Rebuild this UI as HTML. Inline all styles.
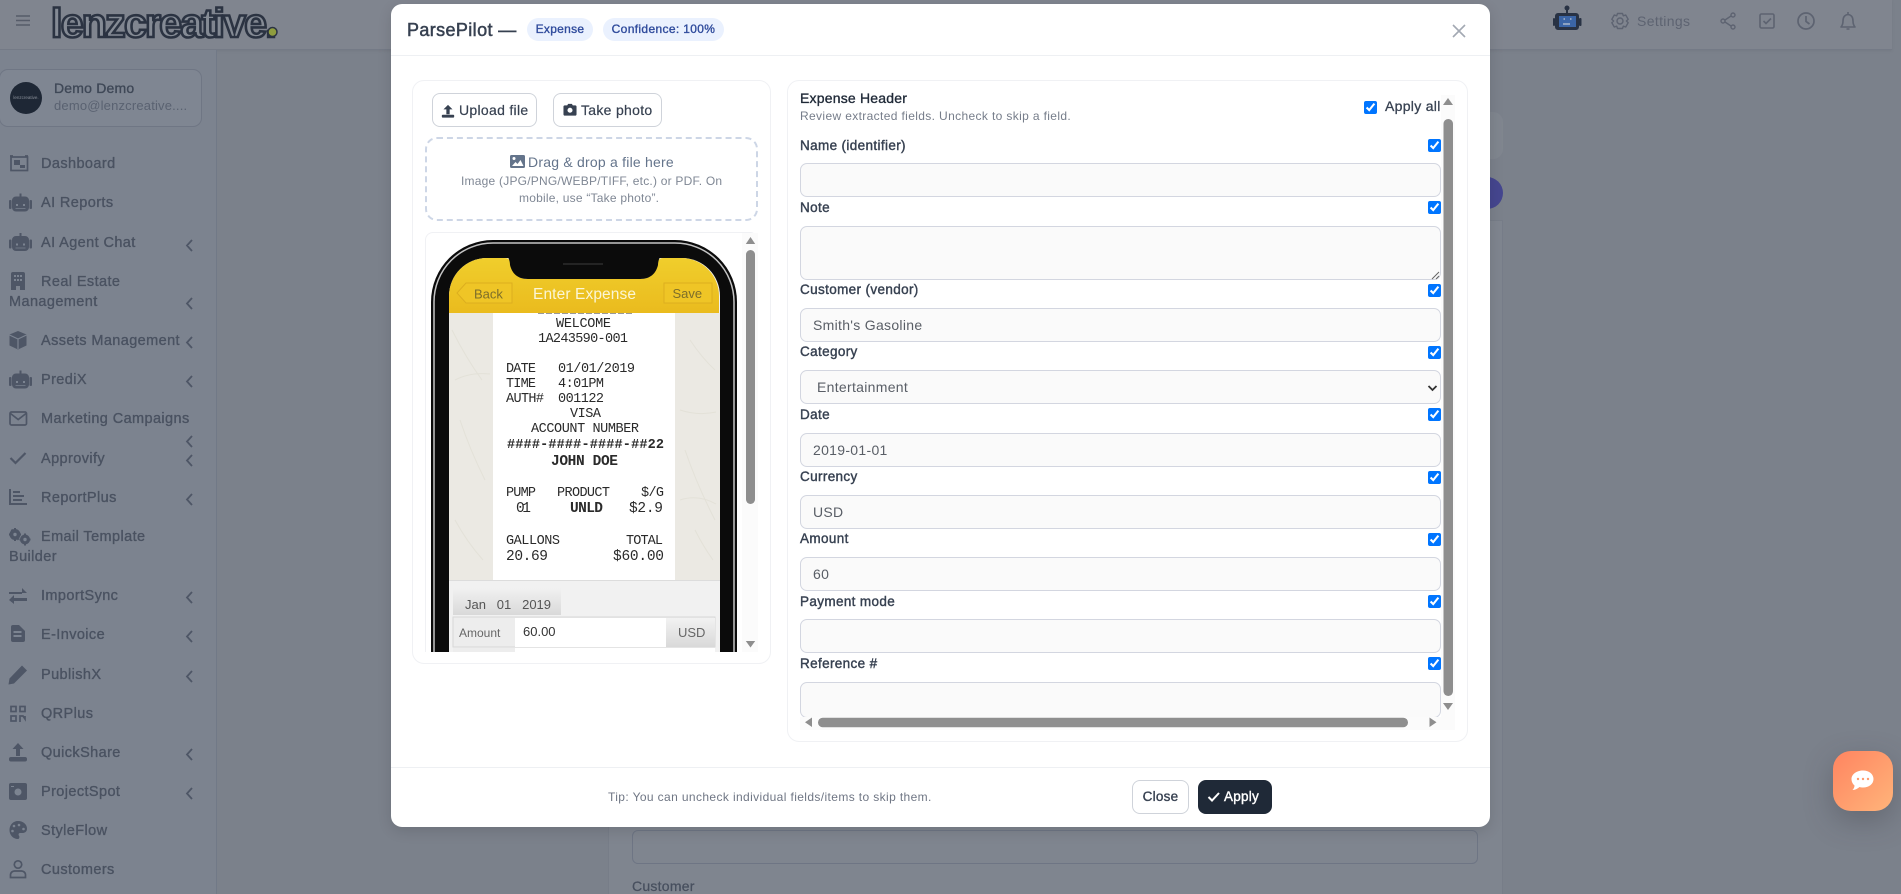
<!DOCTYPE html>
<html><head><meta charset="utf-8">
<style>
*{box-sizing:border-box}
html,body{margin:0;padding:0;width:1901px;height:894px;overflow:hidden;background:#7b818b;font-family:"Liberation Sans",sans-serif}
.a{position:absolute;white-space:nowrap}
.nav{position:absolute;white-space:nowrap;font-size:14.5px;font-weight:400;color:#4a5261;letter-spacing:.4px;line-height:20px;-webkit-text-stroke:.35px #4a5261}
.lbl{position:absolute;left:800px;white-space:nowrap;font-size:13.5px;color:#374151;letter-spacing:.36px;line-height:18px;-webkit-text-stroke:.4px #374151}
.inp{position:absolute;left:800px;width:641px;height:34px;background:#fafafa;border:1px solid #d3d6e0;border-radius:7px;font-size:14px;color:#595e66;padding:0 12px;line-height:33px;letter-spacing:.3px}
input[type=checkbox]{position:absolute;margin:0;width:13px;height:13px;left:1428px;accent-color:#0075ff}
.btn{position:absolute;background:#fff;border:1px solid #cfd3da;border-radius:8px}
</style></head><body>

<!-- page behind -->
<div class="a" style="left:0;top:0;width:1892px;height:50px;background:#80858f;border-bottom:1px solid #747a86;box-shadow:0 1px 3px rgba(0,0,0,.06)"></div>
<div class="a" style="left:0;top:50px;width:217px;height:844px;background:#7c838f;border-right:1px solid #717987"></div>
<div class="a" style="left:608px;top:220px;width:895px;height:674px;background:#7f858f;border-left:1px solid #777d88;border-right:1px solid #777d88;border-top:1px solid #777d88"></div>
<div class="a" style="left:1400px;top:112px;width:103px;height:47px;background:#80868f;border-radius:10px"></div>
<div class="a" style="left:1471px;top:177px;width:32px;height:32px;background:#45468f;border-radius:50%"></div>
<div class="a" style="left:632px;top:830px;width:846px;height:34px;border:1px solid #6e7584;border-radius:6px"></div>
<div class="a" style="left:632px;top:878px;font-size:14px;color:#474f5e;letter-spacing:.25px;line-height:16px;-webkit-text-stroke:.25px #474f5e">Customer</div>

<!-- logo -->
<div class="a" style="left:51px;top:-4px;font-size:41px;font-weight:700;letter-spacing:-1.7px;color:#858b95;-webkit-text-stroke:2.6px #2b3342;line-height:54px">lenzcreative.</div>
<svg class="a" style="left:0;top:0" width="1901" height="894" fill="none">
<circle cx="272.500" cy="32" r="4.500" fill="#8f9d3e" stroke="#2b3342" stroke-width="1.500"/>
<path d="M16 16h14M16 20.500h14M16 25h14" stroke="#565c69" stroke-width="1.600"/>
<g fill="#4e5666" stroke="none">
<!-- robots -->
<g><path d="M19.500 193.500h2v3h3.500a4 4 0 0 1 4 4v7a4 4 0 0 1-4 4h-9a4 4 0 0 1-4-4v-7a4 4 0 0 1 4-4h3.500z"/><rect x="9" y="200" width="2.500" height="9" rx="1"/><rect x="29.500" y="200" width="2.500" height="9" rx="1"/></g>
<path d="M19.500 233h2v3h3.500a4 4 0 0 1 4 4v7a4 4 0 0 1-4 4h-9a4 4 0 0 1-4-4v-7a4 4 0 0 1 4-4h3.500z"/><rect x="9" y="239.500" width="2.500" height="9" rx="1"/><rect x="29.500" y="239.500" width="2.500" height="9" rx="1"/>
<path d="M19.500 370.500h2v3h3.500a4 4 0 0 1 4 4v7a4 4 0 0 1-4 4h-9a4 4 0 0 1-4-4v-7a4 4 0 0 1 4-4h3.500z"/><rect x="9" y="377" width="2.500" height="9" rx="1"/><rect x="29.500" y="377" width="2.500" height="9" rx="1"/>
<!-- building -->
<path d="M13 272h10a2 2 0 0 1 2 2v16h-5v-4h-4v4h-5v-16a2 2 0 0 1 2-2z"/>
<!-- box -->
<path d="M18 331l8.500 3.500v11L18 349.500l-8.500-4v-11z"/>
<!-- chart -->
<path d="M9 489h2v14h16v2H9zM13 491h7v2h-7zM13 495h11v2h-11zM13 499h9v2h-9z"/>
<!-- gears -->
<circle cx="15" cy="534.500" r="5.500"/><circle cx="25" cy="539.500" r="5"/>
<path d="M14 528h2v13h-2zM9 533.500h12v2H9zM24 533.500h2v12h-2zM19.500 538.500h11v2h-11zM10.800 530.300l1.400-1.400 7 10.200-1.400 1.400z"/>
<!-- arrows -->
<path d="M9 592h13v-4l5 5-5 0v1H9zM27 598H14v-3l-5 5 5 4v-3h13z"/>
<!-- file -->
<path d="M13 625h6l6 6v9a2 2 0 0 1-2 2H13a2 2 0 0 1-2-2v-13a2 2 0 0 1 2-2z"/>
<!-- pencil -->
<path d="M22 665.500l5 5-13 13-5.500 1 1-6z"/>
<!-- upload -->
<path d="M18 743l5.500 6h-3.500v7h-4v-7h-3.500zM11 757h14a2 2 0 0 1 2 2v.5a2 2 0 0 1-2 2H11a2 2 0 0 1-2-2v-.5a2 2 0 0 1 2-2z"/>
<!-- camera retro -->
<path d="M11 783h14a2 2 0 0 1 2 2v13a2 2 0 0 1-2 2H11a2 2 0 0 1-2-2v-13a2 2 0 0 1 2-2z"/>
<!-- palette -->
<path d="M18 821c5.500 0 9 3.800 9 7.500s-2.500 4.500-5 4.500h-2c-1.500 0-1.800 1.800-1 2.700.8 1 .3 3.300-1 3.300-5 0-8.500-4-8.500-9s3.500-9 8.500-9z"/>
</g>
<g fill="#7c8491">
<path d="M16 204h2v2h-2zM23 204h2v2h-2zM16 243.500h2v2h-2zM23 243.500h2v2h-2zM16 381h2v2h-2zM23 381h2v2h-2z"/>
<path d="M15.500 208h10v1h-10zM15.500 247.500h10v1h-10zM15.500 385h10v1h-10z" opacity=".7"/>
<path d="M14 275h2v2h-2zM17 275h2v2h-2zM20 275h2v2h-2zM14 279h2v2h-2zM17 279h2v2h-2zM20 279h2v2h-2z"/>
<path d="M13.500 631h8v2h-8zM13.500 635h8v2h-8z"/>
<circle cx="18" cy="792" r="3.500"/><path d="M11 786h3v1h-3z"/>
<circle cx="15" cy="534.500" r="1.700"/><circle cx="25" cy="539.500" r="1.700"/>
<circle cx="14" cy="826" r="1.300"/><circle cx="19" cy="825" r="1.300"/><circle cx="23.500" cy="829" r="1.300"/><circle cx="12.500" cy="831" r="1.300"/>
</g>
<g stroke="#4e5666" stroke-width="1.700">
<rect x="11" y="157" width="16.500" height="13.500"/><path d="M10 156h3M25 156h3"/>
<path d="M14 160h6v5h-6zM20 165h5v3h-5z" fill="#4e5666" stroke="none"/>
<path d="M18 339v10M9.500 335l8.500 4 8.500-4" stroke="#7c8491" stroke-width="1.200"/>
<rect x="10" y="412" width="16.500" height="13" rx="1.500"/><path d="M10.500 413.500l7.700 6 7.800-6"/>
<path d="M10.500 458l5 5 10-10" stroke-width="2.200"/>
<rect x="11" y="706.500" width="5" height="5"/><rect x="20" y="706.500" width="5" height="5"/><rect x="11" y="716" width="5" height="5"/>
<path d="M20 722v-6h3l2 3v-3" />
<circle cx="18" cy="864.500" r="3.700"/><path d="M10.500 877.500v-2.500c0-2.500 2-4 4-4h7c2 0 4 1.500 4 4v2.500z"/>
<g stroke-width="1.800">
<path d="M192 240l-5 5.500 5 5.500M192 298l-5 5.500 5 5.500M192 337l-5 5.500 5 5.500M192 376l-5 5.500 5 5.500M192 436l-5 5.500 5 5.500M192 455l-5 5.500 5 5.500M192 494l-5 5.500 5 5.500M192 592l-5 5.500 5 5.500M192 631l-5 5.500 5 5.500M192 671l-5 5.500 5 5.500M192 749l-5 5.500 5 5.500M192 788l-5 5.500 5 5.500"/>
</g></g>
<!-- header right icons -->
<path d="M1566 7h2v6h8a3 3 0 0 1 3 3v11a3 3 0 0 1-3 3h-18a3 3 0 0 1-3-3V16a3 3 0 0 1 3-3h8z" fill="#283244"/><circle cx="1567" cy="8" r="2.500" fill="#283244"/>
<rect x="1553" y="18" width="2" height="8" rx="1" fill="#283244"/><rect x="1579" y="18" width="2.500" height="8" rx="1" fill="#283244"/>
<rect x="1559" y="16" width="17" height="11" fill="#3b65a6"/><path d="M1563 24h7" stroke="#a9b6ca" stroke-width="1.500"/><path d="M1563.500 19h1.500M1570 19h1.500" stroke="#a9b6ca" stroke-width="1.500"/>
<g stroke="#5d6371" stroke-width="1.400">
<circle cx="1620" cy="21" r="3"/><path d="M1617.500 13.500h5l.8 2.300 2.400-.8 2.500 4.300-1.800 1.700 1.800 1.700-2.500 4.300-2.400-.8-.8 2.300h-5l-.8-2.300-2.400.8-2.500-4.300 1.800-1.700-1.800-1.700 2.500-4.300 2.400.8z" stroke-linejoin="round"/>
<circle cx="1733" cy="15" r="2"/><circle cx="1723" cy="21" r="2"/><circle cx="1733" cy="27" r="2"/><path d="M1731 16l-6 4M1725 22l6 4"/>
<rect x="1760" y="14" width="14" height="14" rx="1.500" stroke-width="1.600"/><path d="M1763.500 21l2.500 2.500 5-5" stroke-width="1.600"/>
<circle cx="1806" cy="21" r="8" stroke-width="1.700"/><path d="M1806 16v5.500l3.500 2.500" stroke-width="1.700"/>
<path d="M1841 27c1.300-1.500 2-3 2-6s1-6 5-6.500c4 .5 5 3.500 5 6.500s.7 4.500 2 6zM1848 12v2.500M1846.500 29h3" stroke-width="1.600" stroke-linejoin="round"/>
</g>
</svg>

<!-- user -->
<div class="a" style="left:-1px;top:69px;width:203px;height:58px;border:1px solid #6f7684;border-radius:9px;background:#7f8692"></div>
<div class="a" style="left:10px;top:82px;width:32px;height:32px;border-radius:50%;background:#1e2735;color:#8b919b;font-size:4.500px;line-height:32px;text-align:center">lenzcreative.</div>
<div class="a" style="left:54px;top:79px;font-size:14px;color:#3f4857;letter-spacing:.2px;line-height:18px;-webkit-text-stroke:.35px #3f4857">Demo Demo</div>
<div class="a" style="left:54px;top:97px;font-size:13px;color:#5a6271;letter-spacing:.18px;line-height:18px">demo@lenzcreative....</div>

<div class="nav" style="left:41px;top:154px">Dashboard</div>
<div class="nav" style="left:41px;top:193px">AI Reports</div>
<div class="nav" style="left:41px;top:233px">AI Agent Chat</div>
<div class="nav" style="left:41px;top:272px">Real Estate</div>
<div class="nav" style="left:9px;top:292px">Management</div>
<div class="nav" style="left:41px;top:331px">Assets Management</div>
<div class="nav" style="left:41px;top:370px">PrediX</div>
<div class="nav" style="left:41px;top:409px">Marketing Campaigns</div>
<div class="nav" style="left:41px;top:449px">Approvify</div>
<div class="nav" style="left:41px;top:488px">ReportPlus</div>
<div class="nav" style="left:41px;top:527px">Email Template</div>
<div class="nav" style="left:9px;top:547px">Builder</div>
<div class="nav" style="left:41px;top:586px">ImportSync</div>
<div class="nav" style="left:41px;top:625px">E-Invoice</div>
<div class="nav" style="left:41px;top:665px">PublishX</div>
<div class="nav" style="left:41px;top:704px">QRPlus</div>
<div class="nav" style="left:41px;top:743px">QuickShare</div>
<div class="nav" style="left:41px;top:782px">ProjectSpot</div>
<div class="nav" style="left:41px;top:821px">StyleFlow</div>
<div class="nav" style="left:41px;top:860px">Customers</div>

<div class="a" style="left:1637px;top:12px;font-size:14px;color:#5d6371;letter-spacing:.35px;line-height:18px">Settings</div>

<!-- chat button -->
<div class="a" style="left:1833px;top:751px;width:60px;height:60px;border-radius:18px;background:linear-gradient(135deg,#ff8460,#ffb47a);box-shadow:0 10px 28px rgba(60,60,70,.35)"></div>
<svg class="a" style="left:1850px;top:769px" width="26" height="24"><path d="M13 1.500c6 0 10.500 3.500 10.500 8.500s-4.500 8.500-10.500 8.500c-1.300 0-2.500-.2-3.500-.5C8 19.300 5.500 21 2.500 21c1.300-1.200 2-2.800 2-4.500C2.800 15 1.500 12.800 1.500 10 1.500 5 7 1.500 13 1.500z" fill="#fff"/><circle cx="8" cy="10" r="1.200" fill="#ff9a6d"/><circle cx="13" cy="10" r="1.200" fill="#ff9a6d"/><circle cx="18" cy="10" r="1.200" fill="#ff9a6d"/></svg>

<!-- modal -->
<div class="a" style="left:391px;top:4px;width:1099px;height:823px;background:#fff;border-radius:11px;box-shadow:0 4px 14px rgba(0,0,0,.12)"></div>
<div class="a" style="left:391px;top:55px;width:1099px;height:1px;background:#eef0f3"></div>
<div class="a" style="left:391px;top:767px;width:1099px;height:1px;background:#eef0f3"></div>

<div class="a" style="left:407px;top:19px;font-size:18px;color:#374151;letter-spacing:.38px;line-height:22px;-webkit-text-stroke:.5px #374151">ParsePilot —</div>
<div class="a" style="left:527px;top:18px;width:66px;height:23px;border-radius:12px;background:#eaf1fe;color:#2f4b9c;font-size:12px;letter-spacing:.3px;text-align:center;line-height:23px;-webkit-text-stroke:.35px #2f4b9c">Expense</div>
<div class="a" style="left:603px;top:18px;width:121px;height:23px;border-radius:12px;background:#eaf1fe;color:#2f4b9c;font-size:12px;letter-spacing:.35px;text-align:center;line-height:23px;-webkit-text-stroke:.35px #2f4b9c">Confidence: 100%</div>
<svg class="a" style="left:1451px;top:23px" width="16" height="16"><path d="M2 2l12 12M14 2L2 14" stroke="#a3a9b3" stroke-width="1.600"/></svg>

<!-- left card -->
<div class="a" style="left:412px;top:80px;width:359px;height:584px;border:1px solid #f0f1f4;border-radius:12px"></div>
<div class="btn" style="left:432px;top:93px;width:105px;height:34px"></div>
<div class="btn" style="left:553px;top:93px;width:109px;height:34px"></div>
<svg class="a" style="left:441px;top:104px" width="14" height="14" viewBox="0 0 15 17"><path d="M7.500 1l5.500 5.500H9.500v6h-4v-6H2zM1 13h13a1 1 0 0 1 1 1v1.500a1 1 0 0 1-1 1H1a1 1 0 0 1-1-1V14a1 1 0 0 1 1-1z" fill="#374151"/></svg>
<div class="a" style="left:459px;top:101px;font-size:14px;color:#374151;letter-spacing:.3px;line-height:18px;-webkit-text-stroke:.2px #374151">Upload file</div>
<svg class="a" style="left:563px;top:103px" width="14" height="14" viewBox="0 0 15 15"><path d="M4.500 2.500L5.500 1h4l1 1.500H13a1.500 1.500 0 0 1 1.500 1.500v8A1.500 1.500 0 0 1 13 13.500H2A1.500 1.500 0 0 1 .5 12V4A1.500 1.500 0 0 1 2 2.500z" fill="#374151"/><circle cx="7.500" cy="7.800" r="2.700" fill="#fff"/></svg>
<div class="a" style="left:581px;top:101px;font-size:14px;color:#374151;letter-spacing:.3px;line-height:18px;-webkit-text-stroke:.2px #374151">Take photo</div>

<div class="a" style="left:425px;top:137px;width:333px;height:84px;border:2px dashed #cdd6e6;border-radius:12px"></div>
<svg class="a" style="left:510px;top:155px" width="15" height="13"><path d="M1.500 0h12A1.500 1.500 0 0 1 15 1.500v10a1.500 1.500 0 0 1-1.500 1.500h-12A1.500 1.500 0 0 1 0 11.500v-10A1.500 1.500 0 0 1 1.500 0z" fill="#64748b"/><circle cx="4" cy="3.500" r="1.500" fill="#fff"/><path d="M2 11l3.500-4 2 2 3-4L13.500 11z" fill="#fff"/></svg>
<div class="a" style="left:528px;top:153px;font-size:14px;color:#64748b;letter-spacing:.22px;line-height:18px">Drag &amp; drop a file here</div>
<div class="a" style="left:461px;top:172px;font-size:12px;color:#7f8794;letter-spacing:.22px;line-height:18px">Image (JPG/PNG/WEBP/TIFF, etc.) or PDF. On</div>
<div class="a" style="left:519px;top:189px;font-size:12px;color:#7f8794;letter-spacing:.22px;line-height:18px">mobile, use “Take photo”.</div>

<!-- image area -->
<div class="a" style="left:425px;top:232px;width:333px;height:420px;border-radius:8px 8px 0 0;overflow:hidden;border:1px solid #f0f1f4;border-bottom:0;border-right:0">
<svg style="position:absolute;left:-426px;top:-233px" width="1901" height="894" font-family="Liberation Mono,monospace">
<defs>
<linearGradient id="y" x1="0" y1="0" x2="0" y2="1"><stop offset="0" stop-color="#f0ce2c"/><stop offset="1" stop-color="#eabb1e"/></linearGradient>
<linearGradient id="g" x1="0" y1="0" x2="0" y2="1"><stop offset="0" stop-color="#f2f2f2"/><stop offset="1" stop-color="#d9d9d9"/></linearGradient>
</defs>
<rect x="431" y="240" width="306" height="640" rx="62" fill="#0b0b0b"/>
<rect x="434" y="243" width="300" height="640" rx="59" fill="none" stroke="#c4c4c4" stroke-width="1.500"/>
<rect x="449" y="258" width="271" height="620" rx="38" fill="#f1f1f1"/>
<path d="M449 313v-17a38 38 0 0 1 38-38h17c6 0 6 3 7 8 2 8 7 13 17 13h112c10 0 15-5 17-13 1-5 1-8 7-8h17a38 38 0 0 1 38 38v17z" fill="url(#y)"/>
<path d="M507 256h154c-2 2-3 6-3 9-2 8-7 14-18 14H528c-11 0-16-6-18-14 0-3-1-7-3-9z" fill="#0b0b0b"/>
<path d="M563 264h40" stroke="#2c2c2c" stroke-width="1.500"/>
<path d="M466 283h46v20h-46l-9-10z" fill="#efc526" stroke="#dcae1f"/>
<text x="474" y="298.500" font-family="Liberation Sans" font-size="13" fill="#7d6e2a">Back</text>
<text x="533" y="299" font-family="Liberation Sans" font-size="15.500" fill="#fbf6d6" textLength="103">Enter Expense</text>
<rect x="664" y="283" width="48" height="20" fill="#efc526" stroke="#dcae1f"/>
<text x="672.500" y="298" font-family="Liberation Sans" font-size="13" fill="#7d6e2a">Save</text>
<rect x="449" y="313" width="271" height="268" fill="#ebe9e3"/>
<path d="M452 330q14 28 30 50M460 420q10 30 25 60M690 340q12 18 25 30M685 450q12 35 30 70M455 520q12 22 28 40M695 530q8 16 18 30M455 380q15-8 35-6M680 410q18 6 36 2M680 500q18-6 36 4" stroke="#e3e1d8" stroke-width="1" fill="none"/>
<rect x="493" y="313" width="182" height="267" fill="#fff"/>
<path d="M538 313.500h95" stroke="#999" stroke-width="1" stroke-dasharray="6 2"/>
<g fill="#2a2a2a" font-size="13.500" transform="translate(0,-1)">
<text x="556" y="328" textLength="55">WELCOME</text>
<text x="538" y="343" textLength="90">1A243590-001</text>
<text x="506" y="373" textLength="30">DATE</text><text x="558" y="373" textLength="77">01/01/2019</text>
<text x="506" y="388" textLength="30">TIME</text><text x="558" y="388" textLength="46">4:01PM</text>
<text x="506" y="403" textLength="38">AUTH#</text><text x="558" y="403" textLength="46">001122</text>
<text x="570" y="418" textLength="31">VISA</text>
<text x="531" y="433" textLength="108">ACCOUNT NUMBER</text>
<text x="507" y="449" textLength="157" font-weight="700">####-####-####-##22</text>
<text x="551" y="466" textLength="67" font-weight="700" font-size="14.500">JOHN DOE</text>
<text x="506" y="497" textLength="30">PUMP</text><text x="557" y="497" textLength="53">PRODUCT</text><text x="641" y="497" textLength="23">$/G</text>
<text x="516" y="513" textLength="15" font-size="14.500">01</text><text x="570" y="513" textLength="33" font-weight="700" font-size="14.500">UNLD</text><text x="629" y="513" textLength="34" font-size="14.500">$2.9</text>
<text x="506" y="545" textLength="54">GALLONS</text><text x="626" y="545" textLength="37">TOTAL</text>
<text x="506" y="561" textLength="42" font-size="14.500">20.69</text><text x="613" y="561" textLength="51" font-size="14.500">$60.00</text>
</g>
<rect x="449" y="580" width="271" height="100" fill="#f1f1f1"/>
<path d="M449 580.500h271" stroke="#dcdcdc"/>
<rect x="453" y="587" width="108" height="28" fill="url(#g)"/>
<text x="465" y="609" font-family="Liberation Sans" font-size="13" fill="#555" xml:space="preserve">Jan   01   2019</text>
<rect x="453" y="617" width="262" height="30" fill="#ededed" stroke="#d8d8d8"/>
<rect x="515" y="618" width="151" height="29" fill="#fff"/>
<rect x="666" y="618" width="49" height="29" fill="url(#g)"/>
<text x="459" y="637" font-family="Liberation Sans" font-size="12" fill="#666">Amount</text>
<text x="523" y="636" font-family="Liberation Sans" font-size="13" fill="#333">60.00</text>
<text x="678" y="637" font-family="Liberation Sans" font-size="13" fill="#666">USD</text>
<rect x="453" y="648" width="62" height="10" fill="#ededed"/><rect x="515" y="648" width="200" height="10" fill="#fff"/>
</svg>
</div>
<div class="a" style="left:742px;top:233px;width:16px;height:419px;background:#fbfbfb"></div>
<svg class="a" style="left:742px;top:233px" width="16" height="419">
<path d="M8.500 4l4.700 7H3.800z" fill="#8e8e8e"/><rect x="4" y="17" width="9" height="254" rx="4.500" fill="#8e8e8e"/><path d="M3.800 408h9.400l-4.700 6.500z" fill="#8e8e8e"/></svg>

<!-- right card -->
<div class="a" style="left:787px;top:80px;width:681px;height:662px;border:1px solid #f0f1f4;border-radius:12px"></div>
<div class="a" style="left:800px;top:89px;font-size:14px;color:#1f2937;letter-spacing:.2px;line-height:18px;-webkit-text-stroke:.35px #1f2937">Expense Header</div>
<div class="a" style="left:800px;top:108px;font-size:12px;color:#767d8a;letter-spacing:.36px;line-height:17px">Review extracted fields. Uncheck to skip a field.</div>
<input type="checkbox" checked style="left:1364px;top:101px">
<div class="a" style="left:1385px;top:97px;font-size:14px;color:#374151;letter-spacing:.3px;line-height:18px;-webkit-text-stroke:.3px #374151">Apply all</div>

<div class="lbl" style="top:137px">Name (identifier)</div><input type="checkbox" checked style="top:139px">
<div class="inp" style="top:163px"></div>
<div class="lbl" style="top:199px">Note</div><input type="checkbox" checked style="top:201px">
<div class="inp" style="top:226px;height:54px"></div>
<svg class="a" style="left:1431px;top:271px" width="9" height="9"><path d="M1 8l7-7M5 8l3-3" stroke="#666" stroke-width="1"/></svg>
<div class="lbl" style="top:281px">Customer (vendor)</div><input type="checkbox" checked style="top:284px">
<div class="inp" style="top:308px">Smith's Gasoline</div>
<div class="lbl" style="top:343px">Category</div><input type="checkbox" checked style="top:346px">
<div class="inp" style="top:370px;padding-left:16px">Entertainment</div>
<svg class="a" style="left:1427px;top:384px" width="11" height="9"><path d="M1.500 2l4 4 4-4" fill="none" stroke="#333" stroke-width="1.800"/></svg>
<div class="lbl" style="top:406px">Date</div><input type="checkbox" checked style="top:408px">
<div class="inp" style="top:433px">2019-01-01</div>
<div class="lbl" style="top:468px">Currency</div><input type="checkbox" checked style="top:471px">
<div class="inp" style="top:495px">USD</div>
<div class="lbl" style="top:530px">Amount</div><input type="checkbox" checked style="top:533px">
<div class="inp" style="top:557px">60</div>
<div class="lbl" style="top:593px">Payment mode</div><input type="checkbox" checked style="top:595px">
<div class="inp" style="top:619px"></div>
<div class="lbl" style="top:655px">Reference #</div><input type="checkbox" checked style="top:657px">
<div class="inp" style="top:682px;height:36px"></div>
<div class="a" style="left:800px;top:717px;width:655px;height:13px;background:#fbfbfb"></div>
<div class="a" style="left:1441px;top:95px;width:14px;height:622px;background:#fbfbfb"></div>
<svg class="a" style="left:800px;top:95px" width="656" height="636">
<path d="M648 3l5 7h-10z" fill="#8e8e8e"/><rect x="643.500" y="24" width="9.500" height="577" rx="4.700" fill="#8e8e8e"/><path d="M643 608h10l-5 7z" fill="#8e8e8e"/>
<path d="M12 622.500v9.500l-7-4.700zM629.500 622.500l7 4.700-7 4.800z" fill="#8e8e8e"/><rect x="18" y="622.700" width="590" height="9.500" rx="4.700" fill="#8e8e8e"/>
</svg>

<!-- footer -->
<div class="a" style="left:608px;top:789px;font-size:12px;color:#6f7684;letter-spacing:.38px;line-height:17px">Tip: You can uncheck individual fields/items to skip them.</div>
<div class="btn" style="left:1132px;top:780px;width:57px;height:34px;font-size:13.500px;color:#374151;text-align:center;line-height:32px;letter-spacing:.25px;-webkit-text-stroke:.35px #374151">Close</div>
<div class="a" style="left:1198px;top:780px;width:74px;height:34px;background:#1f2937;border-radius:8px;color:#fff;font-size:13.500px;line-height:33px;padding-left:26px;letter-spacing:.25px;-webkit-text-stroke:.4px #fff">Apply</div>
<svg class="a" style="left:1207px;top:791px" width="14" height="12"><path d="M1.500 6l3.500 3.500L12 2" fill="none" stroke="#fff" stroke-width="2"/></svg>
</body></html>
